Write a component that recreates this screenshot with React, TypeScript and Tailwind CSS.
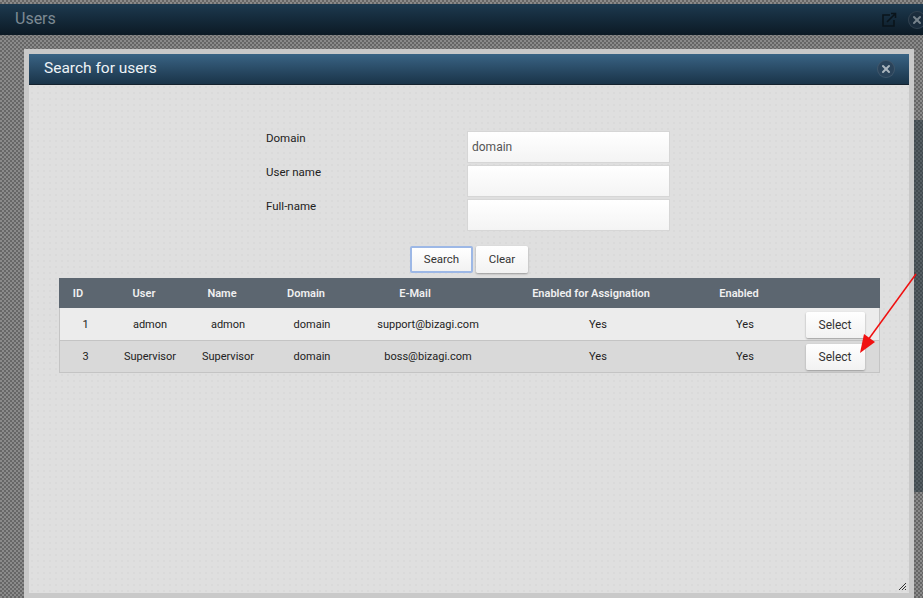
import { X } from 'lucide-react'

const rowCols = 'grid grid-cols-[51px_78px_78px_90px_142px_198px_96px_86px] items-center text-center'
const headCols = 'grid grid-cols-[38px_94px_62px_106px_112px_240px_56px_113px] items-center text-center'
const pattern = 'bg-[repeating-conic-gradient(#666666_0%_25%,#8a8a8a_0%_50%)] bg-[length:4px_4px]'
const dots = 'bg-[radial-gradient(#dadada_1px,transparent_1px)] bg-[length:6px_6px]'

const rows = [
  { id: '1', user: 'admon', name: 'admon', domain: 'domain', email: 'support@bizagi.com', bg: 'bg-[#ececec]' },
  { id: '3', user: 'Supervisor', name: 'Supervisor', domain: 'domain', email: 'boss@bizagi.com', bg: 'bg-[#d9d9d9]' },
]

function CloseBtn({ dark }: { dark?: boolean }) {
  return (
    <span className={`flex h-[18px] w-[18px] items-center justify-center rounded-full border border-[#ffffff1a] ${dark ? 'bg-[#1a2c3c]' : 'bg-[#2a435a]'}`}>
      <X size={12} strokeWidth={4} className={dark ? 'text-[#77838c]' : 'text-[#aab5bd]'} />
    </span>
  )
}

function Field({ label, value }: { label: string; value?: string }) {
  return (
    <div className="flex h-[34px] items-start">
      <div className="w-[201px] text-[11.5px] leading-[14px] text-[#222]">{label}</div>
      <div className="flex h-[32px] w-[203px] items-center border border-[#d6d6d6] bg-gradient-to-b from-white to-[#f4f4f4] pl-[4px] text-[12px] text-[#555]">
        {value}
      </div>
    </div>
  )
}

export default function App() {
  return (
    <div className={`relative h-[598px] w-[923px] overflow-hidden font-['Roboto',sans-serif] ${pattern}`}>
      <div className="mt-[4px] flex h-[31px] items-center justify-between bg-gradient-to-b from-[#1d3a50] to-[#0c1a25] pl-[15px]">
        <span className="-mt-[1px] text-[16px] text-[#7d8a93]">Users</span>
        <div className="flex items-center gap-[11px]">
          <svg width="16" height="16" viewBox="0 0 16 16" fill="none" stroke="#0a141b" strokeWidth="1.6" className="-ml-[7px]">
            <path d="M9 3H2v11h11V8" />
            <path d="M6 10l8-8M10 1.500h4.500V6" />
          </svg>
          <span className="-mr-[3px]"><CloseBtn dark /></span>
        </div>
      </div>

      <div className="ml-[24px] mt-[14px] h-[549px] w-[890px] bg-[#c9c9c9] p-[5px]">
        <div className={`relative h-[539px] bg-[#dfdfdf] ${dots}`}>
          <div className="flex h-[31px] items-center justify-between border-b border-[#14222e] bg-gradient-to-b from-[#3a6485] to-[#1a3449] pl-[15px] pr-[14px]">
            <span className="text-[15.5px] text-[#eef3f7]">Search for users</span>
            <CloseBtn />
          </div>

          <div className="ml-[237px] mt-[46px]">
            <Field label="Domain" value="domain" />
            <Field label="User name" />
            <Field label="Full-name" />
          </div>

          <div className="mt-[13px] flex justify-center gap-[3px]">
            <button className="h-[27px] w-[63px] rounded-[2px] border-2 border-[#9db8e6] bg-gradient-to-b from-white to-[#f2f2f2] text-[11.5px] text-[#333]">Search</button>
            <button className="h-[27px] w-[52px] rounded-[2px] bg-gradient-to-b from-white to-[#f2f2f2] text-[11.5px] text-[#333] shadow-[0_1px_2px_#999]">Clear</button>
          </div>

          <div className="ml-[30px] mt-[5px] w-[821px] text-[11px]">
            <div className={`${headCols} h-[30px] bg-[#5c6670] pt-[2px] font-semibold text-[#f0f0f0]`}>
              <div>ID</div>
              <div>User</div>
              <div>Name</div>
              <div>Domain</div>
              <div>E-Mail</div>
              <div>Enabled for Assignation</div>
              <div>Enabled</div>
              <div />
            </div>
            <div className="border-x border-b border-[#c4c4c4]">
              {rows.map((r) => (
                <div key={r.id} className={`${rowCols} h-[31px] border-b border-[#c4c4c4] pt-[2px] text-[#222] first:h-[33px] last:border-b-0 ${r.bg}`}>
                  <div>{r.id}</div>
                  <div>{r.user}</div>
                  <div>{r.name}</div>
                  <div>{r.domain}</div>
                  <div>{r.email}</div>
                  <div>Yes</div>
                  <div>Yes</div>
                  <div className="flex justify-center pr-[2px]">
                    <button className="-mt-[1px] h-[26px] w-[59px] rounded-[2px] bg-gradient-to-b from-white to-[#f2f2f2] text-[12px] text-[#333] shadow-[0_1px_2px_#999]">Select</button>
                  </div>
                </div>
              ))}
            </div>
          </div>

          <svg className="absolute bottom-[3px] right-[3px]" width="7" height="7" viewBox="0 0 7 7" stroke="#333" strokeWidth="1">
            <path d="M0 7L7 0M3 7L7 3M6 7L7 6" />
          </svg>
        </div>
      </div>

      <div className="absolute right-0 top-[120px] h-[372px] w-[9px] bg-[#1e2f3a80]" />

      <svg className="absolute left-0 top-0" width="923" height="598" fill="none">
        <path d="M916 274L868 340" stroke="#f01010" strokeWidth="1.500" />
        <path d="M860 353L864 334L875 342Z" fill="#f01010" />
      </svg>
    </div>
  )
}
